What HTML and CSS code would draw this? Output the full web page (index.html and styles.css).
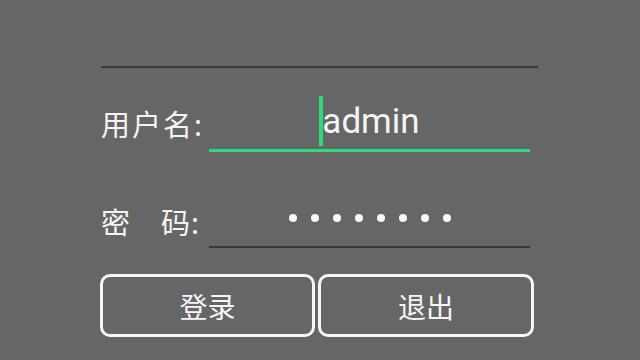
FILE: index.html
```html
<!DOCTYPE html>
<html lang="zh-CN">
<head>
<meta charset="utf-8">
<title>登录</title>
<link rel="stylesheet" href="styles.css">
</head>
<body>
<div class="page">
  <div class="topline"></div>
  <div class="row row-user">
    <div class="label">用户名:</div>
    <div class="field field-active">
      <span class="cursor"></span><span class="value">admin</span>
    </div>
  </div>
  <div class="row row-pass">
    <div class="label label-pass">密　码:</div>
    <div class="field field-pass">
      <div class="dots">
        <span class="dot"></span><span class="dot"></span><span class="dot"></span><span class="dot"></span>
        <span class="dot"></span><span class="dot"></span><span class="dot"></span><span class="dot"></span>
      </div>
    </div>
  </div>
  <div class="buttons">
    <button class="btn btn-login">登录</button>
    <button class="btn btn-exit">退出</button>
  </div>
</div>
</body>
</html>
```

FILE: styles.css
```css
* {
  box-sizing: border-box;
}

html, body {
  margin: 0;
  padding: 0;
  width: 640px;
  height: 360px;
  overflow: hidden;
  background: #666666;
}

body {
  font-family: "Noto Sans CJK SC", "Noto Sans", sans-serif;
  color: #f4f4f4;
}

.page {
  display: flex;
  flex-direction: column;
  padding: 66px 0 0 100px;
}

.topline {
  width: 437px;
  height: 2px;
  margin-left: 1px;
  background: #3a3a3a;
}

.row {
  display: flex;
  margin-left: 1px;
}

.row-user {
  margin-top: 28px;
  height: 56px;
}

.row-pass {
  margin-top: 44px;
  height: 52px;
}

.label {
  width: 108px;
  font-size: 29px;
  letter-spacing: 2px;
  line-height: 55px;
  white-space: nowrap;
}

.label-pass {
  letter-spacing: 1px;
  line-height: 50px;
}

.field {
  width: 321px;
  display: flex;
  justify-content: center;
  align-items: flex-start;
}

.field-active {
  height: 56px;
  border-bottom: 3px solid #2ddb7c;
}

.cursor {
  width: 4px;
  height: 50px;
  margin-left: 0;
  margin-right: -1px;
  background: #2ddb7c;
}

.value {
  font-family: Roboto, "Noto Sans", sans-serif;
  font-size: 35px;
  line-height: 41px;
  padding-top: 5px;
  color: #f4f4f4;
}

.field-pass {
  height: 52px;
  border-bottom: 2px solid #383838;
}

.dots {
  display: flex;
  gap: 14px;
  margin-top: 18px;
}

.dot {
  width: 8px;
  height: 8px;
  border-radius: 50%;
  background: #fafafa;
}

.buttons {
  display: flex;
  gap: 3px;
  margin-top: 26px;
}

.btn {
  height: 63px;
  border: 3px solid #f6f6f6;
  border-radius: 10px;
  background: transparent;
  color: #f6f6f6;
  font-family: "Noto Sans CJK SC", sans-serif;
  font-size: 28px;
  letter-spacing: 0;
  padding: 0;
}

.btn-login {
  width: 215px;
}

.btn-exit {
  width: 216px;
}
```
